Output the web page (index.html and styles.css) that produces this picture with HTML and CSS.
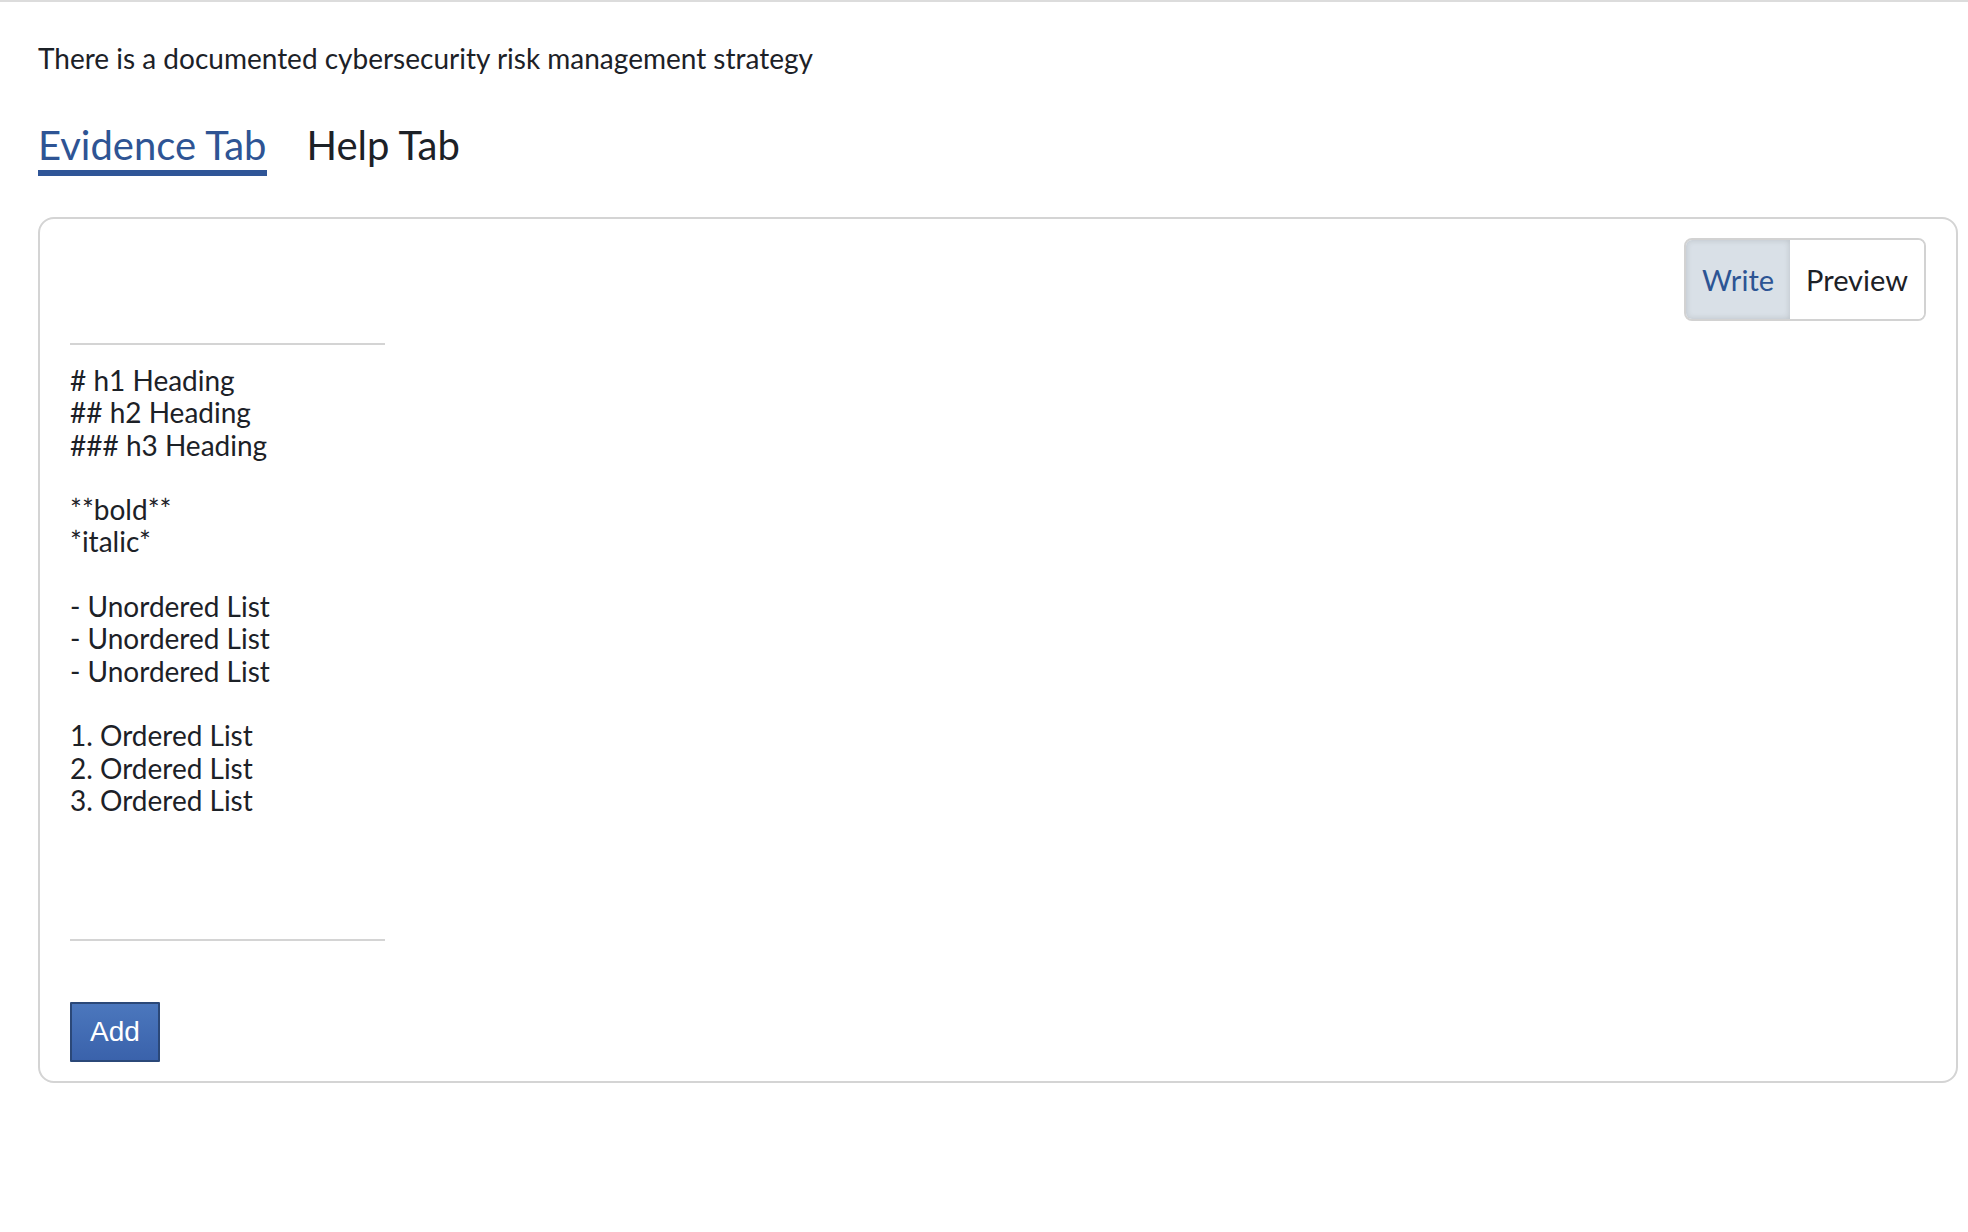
FILE: index.html
```html
<!DOCTYPE html>
<html lang="en">
<head>
<meta charset="utf-8">
<title>Evidence</title>
<link rel="stylesheet" href="styles.css">
</head>
<body>
<div class="page">
  <p class="question">There is a documented cybersecurity risk management strategy</p>
  <nav class="tabs">
    <a class="tab tab-active" href="#">Evidence Tab</a>
    <a class="tab" href="#">Help Tab</a>
  </nav>
  <section class="card">
    <div class="toolbar">
      <div class="toggle">
        <button class="toggle-btn toggle-on" type="button">Write</button>
        <button class="toggle-btn" type="button">Preview</button>
      </div>
    </div>
    <textarea class="editor" spellcheck="false"># h1 Heading
## h2 Heading
### h3 Heading

**bold**
*italic*

- Unordered List
- Unordered List
- Unordered List

1. Ordered List
2. Ordered List
3. Ordered List</textarea>
    <div class="actions">
      <button class="add-btn" type="button">Add</button>
    </div>
  </section>
</div>
</body>
</html>
```
FILE: styles.css
```css
* { box-sizing: border-box; }
html, body { margin: 0; padding: 0; background: #ffffff; }
body {
  font-family: Lato, "Open Sans", sans-serif;
  color: #1c2127;
  border-top: 2px solid #dcdcdc;
}
.page {
  padding: 0 10px 40px 38px;
}
.question {
  margin: 38px 0 0 0;
  font-size: 28px;
  line-height: 36px;
  height: 36px;
}
.tabs {
  display: flex;
  gap: 40px;
  margin-top: 45px;
}
.tab {
  font-size: 40px;
  line-height: 49px;
  color: #1c2127;
  text-decoration: none;
  border-bottom: 6px solid transparent;
}
.tab-active {
  color: #2e5494;
  border-bottom-color: #2f5597;
}
.card {
  margin-top: 41px;
  border: 2px solid #d4d4d4;
  border-radius: 16px;
  padding: 19px 30px 19px 30px;
}
.toolbar {
  display: flex;
  justify-content: flex-end;
}
.toggle {
  display: flex;
  border: 2px solid #d2d2d2;
  border-radius: 8px;
  overflow: hidden;
}
.toggle-btn {
  font-family: Lato, "Open Sans", sans-serif;
  font-size: 29px;
  height: 79px;
  padding: 0 16px;
  border: 0;
  background: #ffffff;
  color: #1c2127;
  display: flex;
  align-items: center;
}
.toggle-on {
  background: #d9e0e7;
  color: #2c5494;
  box-shadow: inset 0 0 6px rgba(0, 0, 0, 0.14);
}
.editor {
  display: block;
  margin-top: 22px;
  width: 315px;
  height: 598px;
  border: 0;
  border-top: 2px solid #d4d4d4;
  border-bottom: 2px solid #d4d4d4;
  padding: 19px 0 0 0;
  font-family: Lato, "Open Sans", sans-serif;
  font-size: 28px;
  line-height: 32.3px;
  color: #1c2127;
  resize: none;
  outline: none;
  overflow: hidden;
  background: transparent;
}
.actions {
  margin-top: 61px;
  display: flex;
}
.add-btn {
  width: 90px;
  height: 60px;
  border: 2px solid #2b4878;
  border-radius: 1px;
  background: linear-gradient(#4b77bd, #3a62ab);
  color: #ffffff;
  font-family: "Liberation Sans", Arial, sans-serif;
  font-size: 28px;
  padding: 0;
}
```
